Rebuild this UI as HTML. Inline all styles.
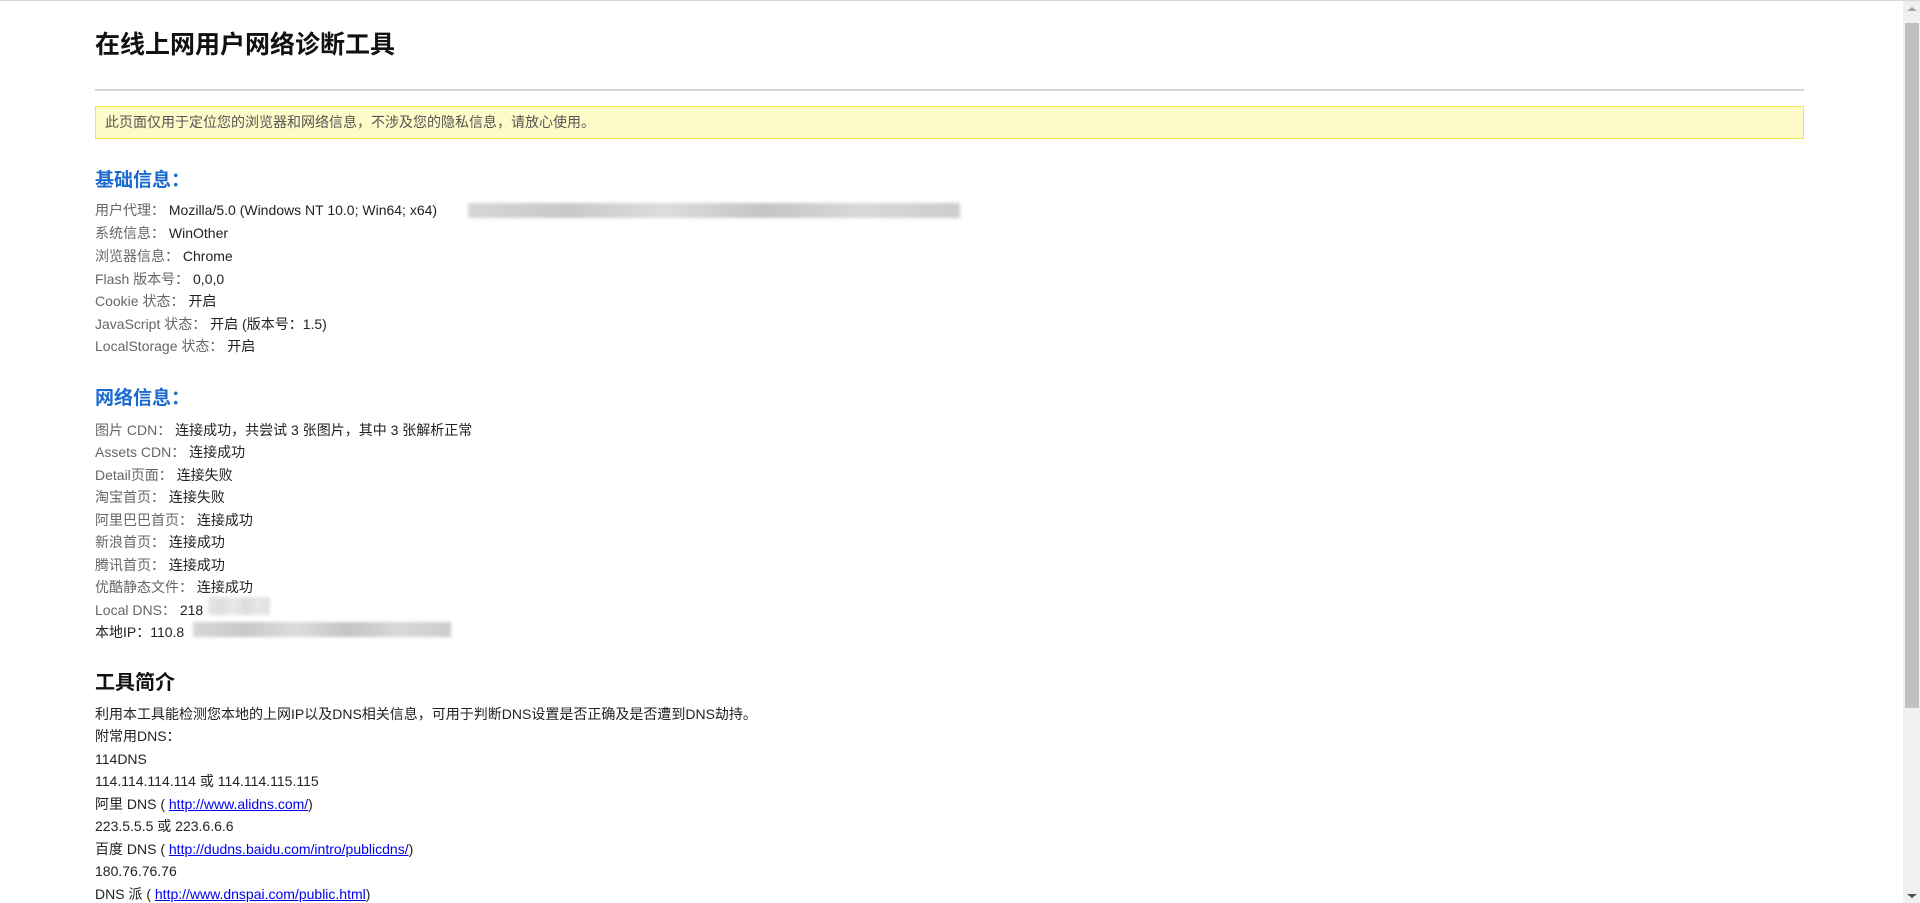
<!DOCTYPE html>
<html><head><meta charset="utf-8"><style>
html,body{margin:0;padding:0;background:#fff;width:1920px;height:903px;overflow:hidden;}
body{font-family:"Liberation Sans","Noto Sans CJK SC",sans-serif;font-size:14px;color:#222;position:relative;border-top:1px solid #d8d8d8;box-sizing:border-box;}
.a{position:absolute;left:95px;white-space:nowrap;}
h1{position:absolute;left:95px;top:27px;margin:0;font-size:25px;font-weight:bold;color:#111;line-height:34px;}
.hr{position:absolute;left:95px;top:88px;width:1709px;height:2px;background:#d6d6d6;}
.note{position:absolute;left:95px;top:105px;width:1707px;height:31px;border:1px solid #f2e44a;background:#fffbc8;color:#555;line-height:31px;box-sizing:content-box;}
.note span{padding-left:9px;}
.h2{font-size:19px;font-weight:bold;color:#1a6ad0;line-height:26px;}
.h3{font-size:20px;font-weight:bold;color:#111;line-height:26px;}
.l{color:#666;}
.v{color:#222;}
.r{line-height:22px;}
a{color:#00e;text-decoration:underline;}
.blur{position:absolute;background:linear-gradient(90deg,#d6d6d6,#c8c8c8 20%,#dcdcdc 40%,#c4c4c4 60%,#d8d8d8 80%,#cccccc);filter:blur(1.5px);}
.sb{position:absolute;right:0;top:0;width:17px;height:903px;background:#f0f0f0;}
.th{position:absolute;left:2px;top:22px;width:14px;height:685px;background:#c1c1c1;}
.up{position:absolute;left:4px;top:6px;width:0;height:0;border-left:5px solid transparent;border-right:5px solid transparent;border-bottom:4px solid #a3a3a3;}
.dn{position:absolute;left:4px;bottom:6px;width:0;height:0;border-left:5px solid transparent;border-right:5px solid transparent;border-top:4px solid #505050;}
</style></head><body>
<h1>在线上网用户网络诊断工具</h1>
<div class="hr"></div>
<div class="note"><span>此页面仅用于定位您的浏览器和网络信息，不涉及您的隐私信息，请放心使用。</span></div>

<div class="a h2" style="top:167px">基础信息：</div>
<div class="a r" style="top:198px"><span class="l">用户代理：</span> <span class="v">Mozilla/5.0 (Windows NT 10.0; Win64; x64)</span></div>
<div class="blur" style="left:468px;top:202px;width:492px;height:15px"></div>
<div class="a r" style="top:221px"><span class="l">系统信息：</span> <span class="v">WinOther</span></div>
<div class="a r" style="top:244px"><span class="l">浏览器信息：</span> <span class="v">Chrome</span></div>
<div class="a r" style="top:267px"><span class="l">Flash 版本号：</span> <span class="v">0,0,0</span></div>
<div class="a r" style="top:289px"><span class="l">Cookie 状态：</span> <span class="v">开启</span></div>
<div class="a r" style="top:312px"><span class="l">JavaScript 状态：</span> <span class="v">开启 (版本号：1.5)</span></div>
<div class="a r" style="top:334px"><span class="l">LocalStorage 状态：</span> <span class="v">开启</span></div>

<div class="a h2" style="top:385px">网络信息：</div>
<div class="a r" style="top:418px"><span class="l">图片 CDN：</span> <span class="v">连接成功，共尝试 3 张图片，其中 3 张解析正常</span></div>
<div class="a r" style="top:440px"><span class="l">Assets CDN：</span> <span class="v">连接成功</span></div>
<div class="a r" style="top:463px"><span class="l">Detail页面：</span> <span class="v">连接失败</span></div>
<div class="a r" style="top:485px"><span class="l">淘宝首页：</span> <span class="v">连接失败</span></div>
<div class="a r" style="top:508px"><span class="l">阿里巴巴首页：</span> <span class="v">连接成功</span></div>
<div class="a r" style="top:530px"><span class="l">新浪首页：</span> <span class="v">连接成功</span></div>
<div class="a r" style="top:553px"><span class="l">腾讯首页：</span> <span class="v">连接成功</span></div>
<div class="a r" style="top:575px"><span class="l">优酷静态文件：</span> <span class="v">连接成功</span></div>
<div class="a r" style="top:598px"><span class="l">Local DNS：</span> <span class="v">218</span></div>
<div class="blur" style="left:208px;top:596px;width:62px;height:18px;opacity:.6"></div>
<div class="a r" style="top:620px"><span class="v">本地IP：110.8</span></div>
<div class="blur" style="left:193px;top:621px;width:258px;height:15px"></div>

<div class="a h3" style="top:669px">工具简介</div>
<div class="a r" style="top:702px">利用本工具能检测您本地的上网IP以及DNS相关信息，可用于判断DNS设置是否正确及是否遭到DNS劫持。</div>
<div class="a r" style="top:724px">附常用DNS：</div>
<div class="a r" style="top:747px">114DNS</div>
<div class="a r" style="top:769px">114.114.114.114 或 114.114.115.115</div>
<div class="a r" style="top:792px">阿里 DNS ( <a>http://www.alidns.com/</a>)</div>
<div class="a r" style="top:814px">223.5.5.5 或 223.6.6.6</div>
<div class="a r" style="top:837px">百度 DNS ( <a>http://dudns.baidu.com/intro/publicdns/</a>)</div>
<div class="a r" style="top:859px">180.76.76.76</div>
<div class="a r" style="top:882px">DNS 派 ( <a>http://www.dnspai.com/public.html</a>)</div>

<div class="sb"><div class="up"></div><div class="th"></div><div class="dn"></div></div>
</body></html>
